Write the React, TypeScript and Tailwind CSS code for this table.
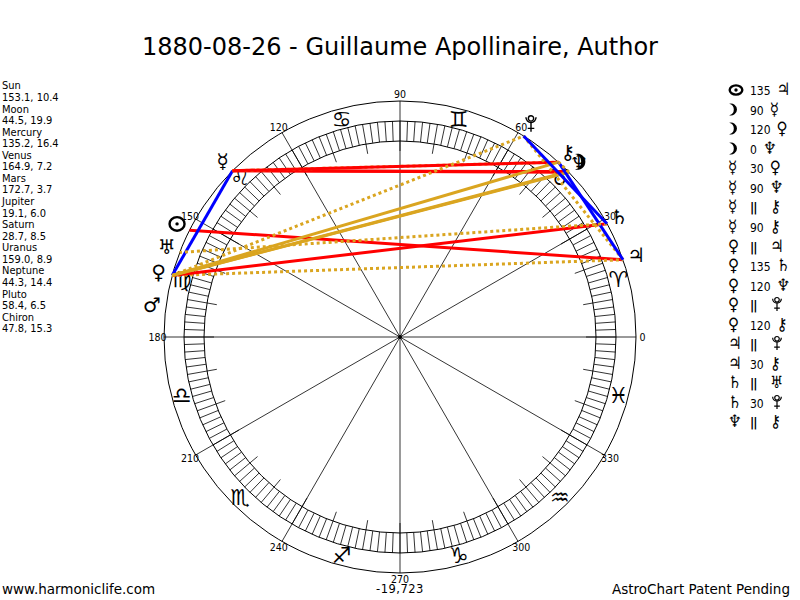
import React from "react";

const CX = 400;
const CY = 337;
const R = 236;

const pos = (deg: number, r: number) => {
  const a = (deg * Math.PI) / 180;
  return { x: CX + r * Math.cos(a), y: CY - r * Math.sin(a) };
};

type Body = { key: string; name: string; glyph: string; lon: number; dec: number };

const bodies: Body[] = [
  { key: "sun", name: "Sun", glyph: "☉", lon: 153.1, dec: 10.4 },
  { key: "moon", name: "Moon", glyph: "☽", lon: 44.5, dec: 19.9 },
  { key: "mercury", name: "Mercury", glyph: "☿", lon: 135.2, dec: 16.4 },
  { key: "venus", name: "Venus", glyph: "♀", lon: 164.9, dec: 7.2 },
  { key: "mars", name: "Mars", glyph: "♂", lon: 172.7, dec: 3.7 },
  { key: "jupiter", name: "Jupiter", glyph: "♃", lon: 19.1, dec: 6.0 },
  { key: "saturn", name: "Saturn", glyph: "♄", lon: 28.7, dec: 8.5 },
  { key: "uranus", name: "Uranus", glyph: "♅", lon: 159.0, dec: 8.9 },
  { key: "neptune", name: "Neptune", glyph: "♆", lon: 44.3, dec: 14.4 },
  { key: "pluto", name: "Pluto", glyph: "", lon: 58.4, dec: 6.5 },
  { key: "chiron", name: "Chiron", glyph: "⚷", lon: 47.8, dec: 15.3 },
];

const byKey = (k: string) => bodies.find((b) => b.key === k)!;

// aspect: [from, kind, to]
const aspects: [string, string, string][] = [
  ["sun", "135", "jupiter"],
  ["moon", "90", "mercury"],
  ["moon", "120", "venus"],
  ["moon", "0", "neptune"],
  ["mercury", "30", "venus"],
  ["mercury", "90", "neptune"],
  ["mercury", "par", "chiron"],
  ["mercury", "90", "chiron"],
  ["venus", "par", "jupiter"],
  ["venus", "135", "saturn"],
  ["venus", "120", "neptune"],
  ["venus", "par", "pluto"],
  ["venus", "120", "chiron"],
  ["jupiter", "par", "pluto"],
  ["jupiter", "30", "chiron"],
  ["saturn", "par", "uranus"],
  ["saturn", "30", "pluto"],
  ["neptune", "par", "chiron"],
];

const signs = ["♈", "♉", "♊", "♋", "♌", "♍", "♎", "♏", "♐", "♑", "♒", "♓"];

const lineStyle = (kind: string) => {
  if (kind === "90" || kind === "135") return { stroke: "#ff0000", dash: undefined };
  if (kind === "30") return { stroke: "#0000ff", dash: undefined };
  if (kind === "par") return { stroke: "#daa520", dash: "3 3" };
  return { stroke: "#daa520", dash: undefined };
};

const PlutoMark: React.FC<{ x?: number; y?: number; s?: number }> = ({ x = 0, y = 0, s = 1 }) => (
  <g transform={`translate(${x} ${y}) scale(${s})`} fill="none" stroke="#000" strokeWidth={1.3}>
    <circle cx={0} cy={-6} r={2.4} />
    <path d="M-4.6 -7 A4.6 4.6 0 0 0 4.6 -7" />
    <path d="M0 -2.4 V6 M-3 3 H3" />
  </g>
);

const SunMark: React.FC<{ x?: number; y?: number; rx?: number; ry?: number }> = ({ x = 0, y = 0, rx = 7, ry = 6.5 }) => (
  <g>
    <ellipse cx={x} cy={y} rx={rx} ry={ry} fill="none" stroke="#000" strokeWidth={2.4} />
    <circle cx={x} cy={y} r={1.7} fill="#000" />
  </g>
);

// crescent opening to the left
const MoonMark: React.FC<{ x?: number; y?: number; s?: number }> = ({ x = 0, y = 0, s = 1 }) => (
  <g transform={`translate(${x} ${y}) scale(${s})`}>
    <path d="M-2 -6.7 A7 7 0 1 1 -2 6.7 A6.87 6.87 0 0 0 -2 -6.7 Z" fill="#000" />
  </g>
);

const PlutoIcon = () => (
  <svg width="14" height="16" viewBox="-7 -10 14 17" className="inline-block align-[-2px]">
    <PlutoMark />
  </svg>
);

const SunIcon = () => (
  <svg width="16" height="12" viewBox="-8 -6 16 12" className="inline-block align-[-1px]">
    <SunMark rx={6.3} ry={4.6} />
  </svg>
);

const MoonIcon = () => (
  <svg width="11" height="13" viewBox="-3 -7.5 12 15" className="inline-block align-[-1px]">
    <MoonMark />
  </svg>
);

const Glyph: React.FC<{ k: string }> = ({ k }) => {
  if (k === "pluto") return <PlutoIcon />;
  if (k === "sun") return <SunIcon />;
  if (k === "moon") return <MoonIcon />;
  return <span className="text-[17px] leading-none">{byKey(k).glyph}</span>;
};

const Chart = () => {
  const ticks2 = Array.from({ length: 180 }, (_, i) => i * 2);
  const ticks10 = Array.from({ length: 36 }, (_, i) => i * 10);
  const spokes = Array.from({ length: 12 }, (_, i) => i * 30);

  return (
    <svg
      width="520"
      height="511"
      viewBox="140 70 520 511"
      className="overflow-visible shrink-0"
      fontFamily="'DejaVu Sans', sans-serif"
    >
      <circle cx={CX} cy={CY} r={R} fill="none" stroke="#000" strokeWidth={1} />
      <circle cx={CX} cy={CY} r={216} fill="none" stroke="#000" strokeWidth={1} />
      <circle cx={CX} cy={CY} r={196} fill="none" stroke="#000" strokeWidth={1} />

      {ticks2.map((d) => {
        const a = pos(d, 196);
        const b = pos(d, 216);
        return <line key={`t${d}`} x1={a.x} y1={a.y} x2={b.x} y2={b.y} stroke="#000" strokeWidth={0.8} />;
      })}
      {ticks10.map((d) => {
        const a = pos(d, 186);
        const b = pos(d, 196);
        return <line key={`m${d}`} x1={a.x} y1={a.y} x2={b.x} y2={b.y} stroke="#000" strokeWidth={0.8} />;
      })}
      {spokes.map((d) => {
        const b = pos(d, R);
        return <line key={`s${d}`} x1={CX} y1={CY} x2={b.x} y2={b.y} stroke="#000" strokeWidth={0.8} />;
      })}
      <circle cx={CX} cy={CY} r={2} fill="#000" />

      {spokes.map((d) => {
        const p = pos(d, 242.5);
        return (
          <text
            key={`l${d}`}
            x={p.x}
            y={p.y + 3.8}
            fontSize={10.5}
            textAnchor="middle"
            fontFamily="'DejaVu Sans Condensed', 'DejaVu Sans', sans-serif"
            fill="#000"
          >
            {d}
          </text>
        );
      })}

      {signs.map((s, i) => {
        const p = pos(15 + i * 30, 226);
        return (
          <text key={s} x={p.x} y={p.y + 8} fontSize={22} textAnchor="middle" fill="#000">
            {s}
          </text>
        );
      })}

      {aspects.map(([a, kind, b], i) => {
        if (kind === "0") return null;
        const p1 = pos(byKey(a).lon, R);
        const p2 = pos(byKey(b).lon, R);
        const st = lineStyle(kind);
        return (
          <line
            key={`a${i}`}
            x1={p1.x}
            y1={p1.y}
            x2={p2.x}
            y2={p2.y}
            stroke={st.stroke}
            strokeWidth={3}
            strokeDasharray={st.dash}
          />
        );
      })}

      {bodies.map((b) => {
        const p = pos(b.lon, 250);
        if (b.key === "pluto") return <PlutoMark key={b.key} x={p.x} y={p.y + 1} s={1.1} />;
        if (b.key === "sun") return <SunMark key={b.key} x={p.x} y={p.y} rx={7.5} ry={6.8} />;
        if (b.key === "moon") return <MoonMark key={b.key} x={p.x - 1} y={p.y} s={1.15} />;
        return (
          <text key={b.key} x={p.x} y={p.y + 7} fontSize={20} textAnchor="middle" fill="#000">
            {b.glyph}
          </text>
        );
      })}
    </svg>
  );
};

export default function App() {
  return (
    <div className="w-[800px] h-[600px] bg-white text-black flex flex-col overflow-hidden font-['DejaVu_Sans',sans-serif]">
      {/* TITLE */}
      <div className="h-[70px] shrink-0 pt-[32.7px] text-center text-[24px] leading-[28px]">
        1880-08-26 - Guillaume Apollinaire, Author
      </div>

      {/* LIST + WHEEL + ASPECTS */}
      <div className="h-[511px] shrink-0 flex">
        <div className="w-[140px] shrink-0 pl-[2px] pt-[10.4px] text-[11px] leading-[11.56px] font-['DejaVu_Sans_Condensed',sans-serif]">
          {bodies.map((b) => (
            <React.Fragment key={b.key}>
              <div>{b.name}</div>
              <div>
                {b.lon.toFixed(1)}, {b.dec.toFixed(1)}
              </div>
            </React.Fragment>
          ))}
        </div>

        <Chart />

        <div className="flex-1 pl-[68px] pt-[11.4px] text-[12px] leading-[19.53px] font-['DejaVu_Sans_Condensed',sans-serif]">
          {aspects.map(([a, kind, b], i) => (
            <div key={i} className="h-[19.53px] whitespace-nowrap">
              <span className="inline-block w-[22px]">
                <Glyph k={a} />
              </span>
              {kind === "par" ? (
                <span className="inline-block w-[20px] font-bold text-[13px] leading-none tracking-[-1px]">||</span>
              ) : (
                <span className="inline-block mr-[6px] leading-none">{kind}</span>
              )}
              <Glyph k={b} />
            </div>
          ))}
        </div>
      </div>

      {/* FOOTER */}
      <div className="h-[19px] shrink-0 grid grid-cols-3 text-[13.5px] leading-[17px]">
        <div className="pl-[2px]">www.harmoniclife.com</div>
        <div className="text-center text-[11.5px] tracking-[0.5px]">-19,723</div>
        <div className="text-right pr-[10px]">AstroChart Patent Pending</div>
      </div>
    </div>
  );
}
